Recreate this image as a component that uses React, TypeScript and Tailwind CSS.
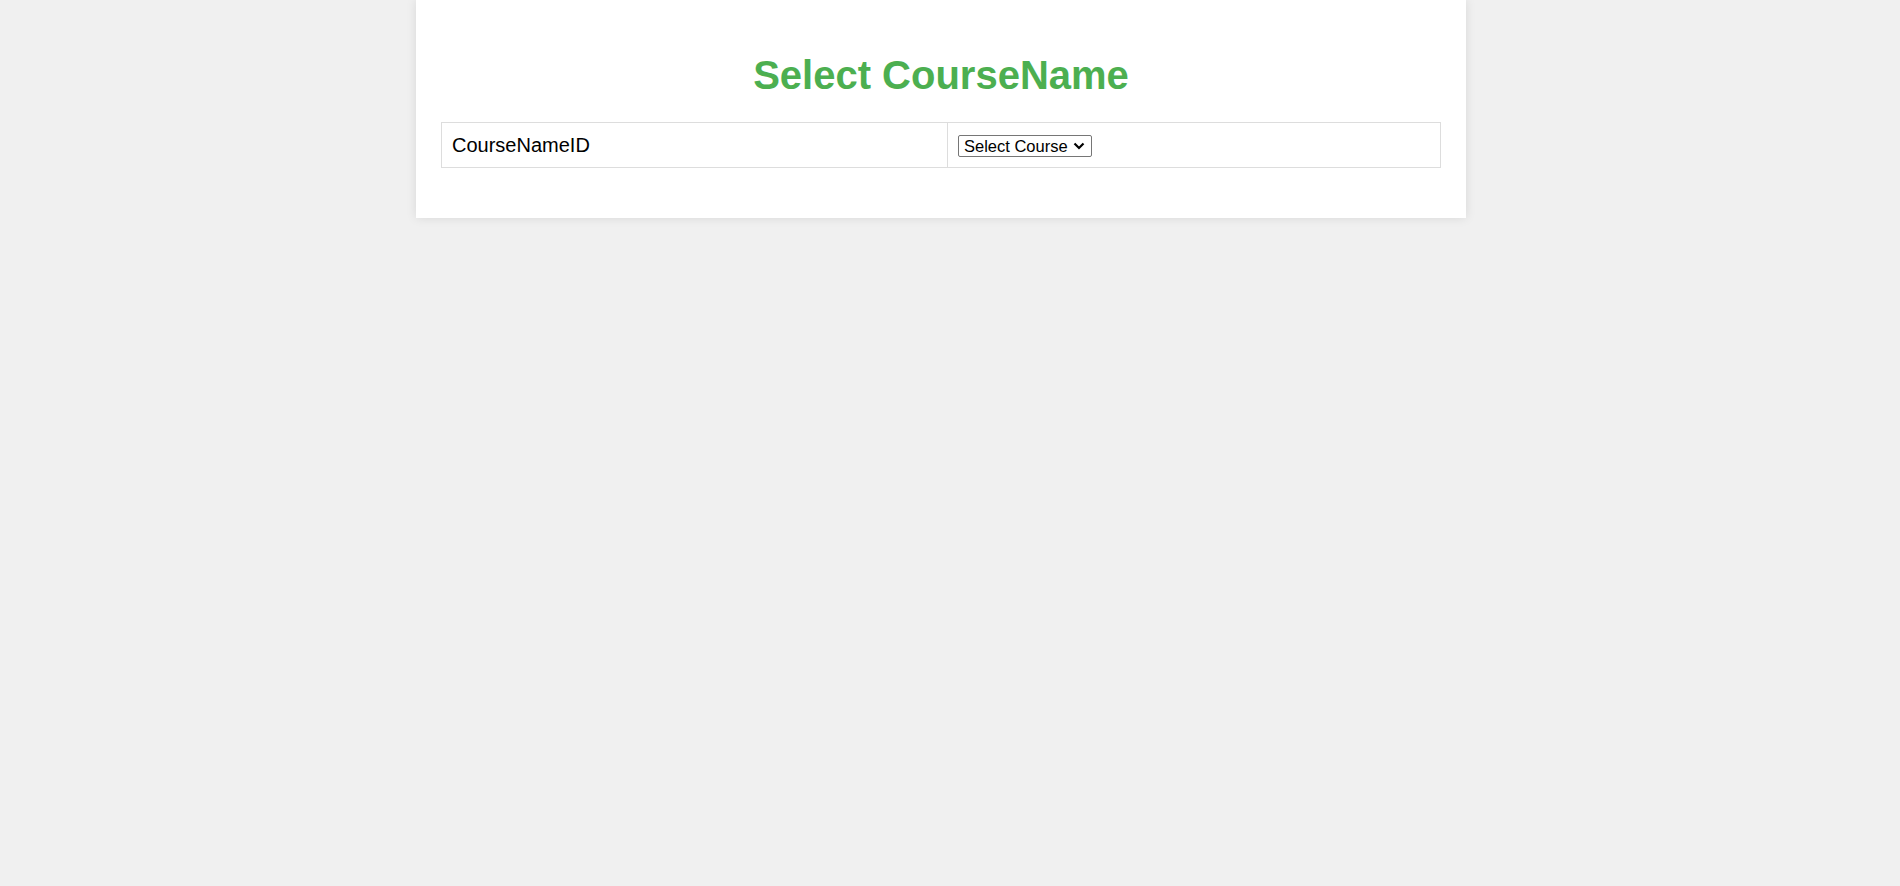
import React from 'react';

export default function App() {
  return (
    <div className="min-h-screen w-full bg-[#f0f0f0] font-['Liberation_Sans',Arial,sans-serif]">
      <div className="w-[1882px] flex justify-center">
        <div className="w-[1050px] bg-white px-[25px] pt-[52px] pb-[50px] shadow-[0_0_10px_rgba(0,0,0,0.1)]">
          <h1 className="text-center text-[40px] leading-[46px] font-bold text-[#4caf50]">
            Select CourseName
          </h1>
          <table className="mt-[24px] w-[1000px] border-collapse">
            <tbody>
              <tr>
                <td className="w-[506px] border border-[#dddddd] pt-[11px] pb-[10px] px-[10px] text-[20px] leading-[23px] text-black">
                  CourseNameID
                </td>
                <td className="border border-[#dddddd] pt-[11px] pb-[10px] px-[10px] align-middle">
                  <div className="relative w-[134px] h-[22px]">
                    <select
                      defaultValue=""
                      className="appearance-none w-[134px] h-[22px] border border-[#767676] rounded-[2px] bg-white pl-[5px] pr-[20px] text-[16.5px] leading-[20px] text-black font-['Liberation_Sans',Arial,sans-serif] outline-none"
                    >
                      <option value="">Select Course</option>
                    </select>
                    <svg
                      className="pointer-events-none absolute right-[7px] top-[7px]"
                      width="12"
                      height="8"
                      viewBox="0 0 12 8"
                      fill="none"
                    >
                      <path d="M1.5 1.5 L6 6 L10.5 1.5" stroke="#000" strokeWidth="2.2" />
                    </svg>
                  </div>
                </td>
              </tr>
            </tbody>
          </table>
        </div>
      </div>
    </div>
  );
}
